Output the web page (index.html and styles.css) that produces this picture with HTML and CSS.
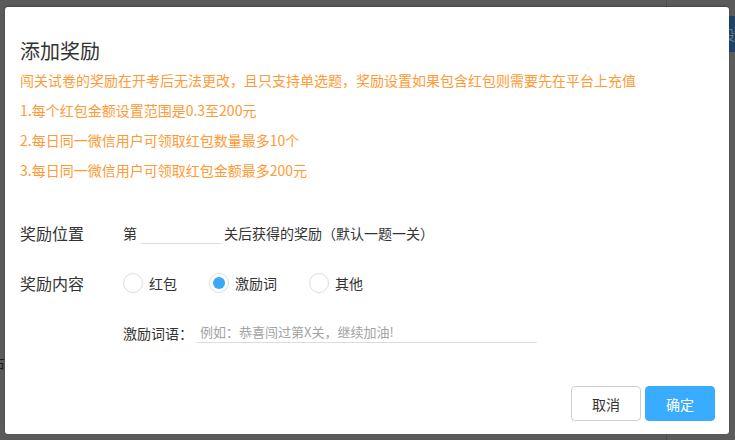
FILE: index.html
```html
<!DOCTYPE html>
<html lang="zh-CN">
<head>
<meta charset="utf-8">
<title>添加奖励</title>
<link rel="stylesheet" href="styles.css">
</head>
<body>
<div class="page">
  <div class="page-main"><span class="page-frag">右</span></div>
  <div class="page-side"><div class="side-tab">设</div></div>
</div>
<div class="modal">
  <h2 class="modal-title">添加奖励</h2>
  <div class="notice">
    <p>闯关试卷的奖励在开考后无法更改，且只支持单选题，奖励设置如果包含红包则需要先在平台上充值</p>
    <p>1.每个红包金额设置范围是0.3至200元</p>
    <p>2.每日同一微信用户可领取红包数量最多10个</p>
    <p>3.每日同一微信用户可领取红包金额最多200元</p>
  </div>
  <div class="form">
    <div class="row">
      <div class="label">奖励位置</div>
      <span class="text">第</span>
      <span class="input input-short"></span>
      <span class="text">关后获得的奖励（默认一题一关）</span>
    </div>
    <div class="row">
      <div class="label">奖励内容</div>
      <span class="radio-item"><span class="radio"></span><span class="text">红包</span></span>
      <span class="radio-item"><span class="radio checked"><span class="dot"></span></span><span class="text">激励词</span></span>
      <span class="radio-item"><span class="radio"></span><span class="text">其他</span></span>
    </div>
    <div class="row row-sub">
      <span class="text">激励词语：</span>
      <span class="input input-long"><span class="placeholder">例如：恭喜闯过第X关，继续加油!</span></span>
    </div>
  </div>
  <div class="footer">
    <button class="btn btn-cancel">取消</button>
    <button class="btn btn-ok">确定</button>
  </div>
</div>
</body>
</html>
```
FILE: styles.css
```css
html, body {
  margin: 0;
  padding: 0;
}
body {
  width: 735px;
  height: 440px;
  overflow: hidden;
  background: #5b5b5b;
  font-family: "Noto Sans CJK SC", "Noto Sans", sans-serif;
  position: relative;
}
.page {
  display: flex;
  height: 440px;
}
.page-main {
  width: 670px;
  border-right: 1px solid #4c4c4c;
  padding-top: 349px;
  box-sizing: border-box;
  overflow: hidden;
}
.page-frag {
  display: inline-block;
  margin-left: -9px;
  font-size: 14px;
  color: #1e1e1e;
}
.page-side {
  flex: 1;
  padding-top: 16px;
  padding-left: 60px;
}
.side-tab {
  height: 36px;
  background: #1d4467;
  color: #6b7c8c;
  font-size: 14px;
  line-height: 36px;
  overflow: hidden;
  text-indent: -6px;
}
.modal {
  position: absolute;
  left: 5px;
  top: 7px;
  width: 724px;
  height: 427px;
  box-sizing: border-box;
  background: #fff;
  border-radius: 3px;
  box-shadow: 0 -1px 2px rgba(0, 0, 0, 0.25);
  padding: 30px 14px 13px 15px;
  display: flex;
  flex-direction: column;
}
.modal-title {
  margin: 0;
  font-size: 20px;
  line-height: 28px;
  font-weight: normal;
  color: #333;
}
.notice p {
  margin: 0;
  font-size: 14px;
  line-height: 30px;
  color: #ff9a35;
}
.form {
  margin-top: 23px;
}
.row {
  display: flex;
  align-items: center;
  height: 50px;
  font-size: 14px;
  color: #333;
}
.row-sub {
  padding-left: 103px;
}
.label {
  width: 103px;
  font-size: 16px;
  color: #333;
}
.text {
  white-space: nowrap;
}
.input {
  display: block;
  box-sizing: border-box;
  border-bottom: 1px solid #dcdcdc;
  height: 22px;
}
.input-short {
  width: 80px;
  margin: 0 3px 0 4px;
  transform: translateY(0px);
}
.input-long {
  width: 340px;
  margin-left: 4px;
  height: 20px;
  padding-left: 3px;
  font-size: 13px;
  line-height: 18px;
}
.placeholder {
  color: #a3a3a3;
}
.radio-item {
  display: flex;
  align-items: center;
  margin-right: 32px;
}
.radio {
  width: 20px;
  height: 20px;
  box-sizing: border-box;
  border: 1px solid #dedede;
  border-radius: 50%;
  margin-right: 6px;
  display: flex;
  align-items: center;
  justify-content: center;
}
.dot {
  width: 12px;
  height: 12px;
  border-radius: 50%;
  background: #38a8f8;
}
.footer {
  margin-top: auto;
  display: flex;
  justify-content: flex-end;
  gap: 4px;
}
.btn {
  width: 70px;
  height: 35px;
  border-radius: 4px;
  font-family: inherit;
  font-size: 14px;
  cursor: pointer;
  padding: 0;
}
.btn-cancel {
  background: #fff;
  border: 1px solid #cfcfcf;
  color: #333;
}
.btn-ok {
  background: #3aacff;
  border: 1px solid #3aacff;
  color: #fff;
}
```
